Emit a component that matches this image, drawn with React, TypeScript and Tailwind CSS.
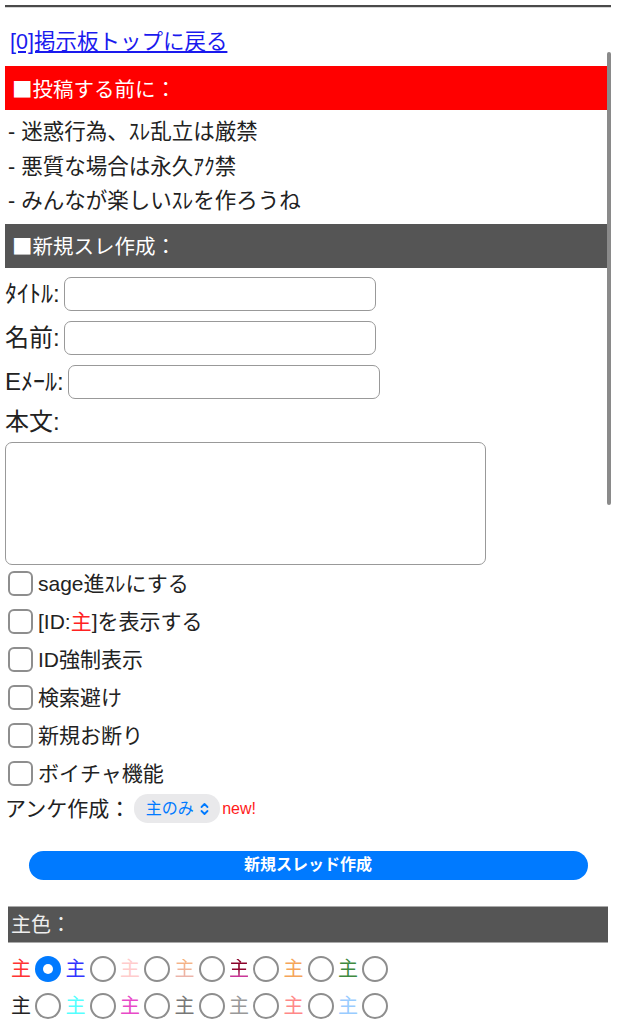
import React from 'react';

const checks = [
  { key: 'sage', label: <>sage進ｽﾚにする</> },
  {
    key: 'id',
    label: (
      <>
        [ID:<span className="text-[#ff2222]">主</span>]を表示する
      </>
    ),
  },
  { key: 'force', label: <>ID強制表示</> },
  { key: 'search', label: <>検索避け</> },
  { key: 'new', label: <>新規お断り</> },
  { key: 'voice', label: <>ボイチャ機能</> },
];

const colorRows = [
  [
    'text-[#ff3333]',
    'text-[#3333ff]',
    'text-[#ffcccc]',
    'bg-linear-to-b from-[#f7b27a] to-[#eab4b0] bg-clip-text text-transparent',
    'bg-linear-to-b from-[#8a0028] via-[#8a0028] to-[#e040c0] bg-clip-text text-transparent',
    'text-[#f5a55a]',
    'text-[#3f8a3f]',
  ],
  [
    'text-[#222222]',
    'text-[#55ffff]',
    'text-[#e84ac8]',
    'text-[#777777]',
    'text-[#999999]',
    'text-[#ff8888]',
    'text-[#99ccff]',
  ],
];

function SectionBar({ children, red }: { children: React.ReactNode; red?: boolean }) {
  return (
    <div
      className={
        "flex h-[44px] items-center px-[7px] font-['Noto_Sans_CJK_JP',sans-serif] text-[20.5px] text-white " +
        (red ? 'bg-[#ff0000]' : 'bg-[#555555]')
      }
    >
      {children}
    </div>
  );
}

function Radio({ checked }: { checked?: boolean }) {
  if (checked) {
    return (
      <span className="flex h-[26px] w-[26px] items-center justify-center rounded-full bg-[#007aff]">
        <span className="h-[10px] w-[10px] rounded-full bg-white" />
      </span>
    );
  }
  return <span className="h-[26px] w-[26px] rounded-full border-2 border-[#8e8e8e]" />;
}

export default function App() {
  return (
    <div className="relative min-h-screen bg-white pl-[5px] pr-[6px] font-['Liberation_Sans','Noto_Sans_CJK_JP',sans-serif] text-[#222]">
      <div className="pt-[5px]">
        <div className="h-[3px] border-t-2 border-b border-t-[#4a4a4a] border-b-[#d6d6d6]" />
      </div>

      <div className="pt-[21px] pb-[10px] pl-[5px]">
        <a href="#" className="text-[21.5px] leading-[26px] text-[#1a1aee] underline">
          [0]掲示板トップに戻る
        </a>
      </div>

      <SectionBar red>■投稿する前に：</SectionBar>
      <ul className="py-[5px] pl-[3px] text-[21.5px] leading-[34.5px]">
        <li>- 迷惑行為、ｽﾚ乱立は厳禁</li>
        <li>- 悪質な場合は永久ｱｸ禁</li>
        <li>- みんなが楽しいｽﾚを作ろうね</li>
      </ul>

      <SectionBar>■新規スレ作成：</SectionBar>

      <div className="flex flex-col gap-[10px] pt-[9px]">
        {['ﾀｲﾄﾙ:', '名前:', 'Eﾒｰﾙ:'].map((l) => (
          <div key={l} className="flex h-[34px] items-center">
            <span className="text-[24px] leading-none">{l}</span>
            <span className="ml-[4px] h-[34px] w-[312px] rounded-[7px] border-[1.5px] border-[#999]" />
          </div>
        ))}
      </div>
      <div className="mt-[11px] text-[24px] leading-[24px]">本文:</div>
      <div className="mt-[8px] h-[123px] w-[481px] rounded-[7px] border-[1.5px] border-[#999]" />

      <div className="flex flex-col">
        {checks.map((c) => (
          <div key={c.key} className="flex h-[38px] items-center">
            <span className="ml-[3px] h-[25px] w-[25px] rounded-[6px] border-2 border-[#8e8e8e]" />
            <span className="ml-[5px] text-[21px] leading-none">{c.label}</span>
          </div>
        ))}
      </div>

      <div className="flex h-[32px] items-center">
        <span className="text-[21px] leading-none">アンケ作成：</span>
        <span className="ml-[4px] flex h-[29px] w-[86px] items-center justify-center gap-[6px] rounded-[14px] bg-[#e9e9eb] text-[16px] text-[#007aff]">
          主のみ
          <svg width="9" height="14" viewBox="0 0 9 14" fill="none" stroke="#007aff" strokeWidth="1.8" strokeLinecap="round" strokeLinejoin="round">
            <path d="M1.5 5 L4.5 2 L7.5 5" />
            <path d="M1.5 9 L4.5 12 L7.5 9" />
          </svg>
        </span>
        <span className="ml-[2px] text-[16px] text-[#ff1a1a]">new!</span>
      </div>

      <button className="mx-auto mt-[26px] flex h-[29px] w-[559px] items-center justify-center rounded-full bg-[#007aff] text-[16px] font-bold text-white">
        新規スレッド作成
      </button>

      <div className="mx-[3px] mt-[26px] flex h-[37px] items-center border-y-[1.5px] border-[#aaa] bg-[#555555] px-[3px] font-['Noto_Sans_CJK_JP',sans-serif] text-[20px] text-[#eeeeee]">
        主色：
      </div>

      <div className="flex flex-col pt-[8px] pl-[6px]">
        {colorRows.map((row, ri) => (
          <div key={ri} className="flex h-[37px] items-center">
            {row.map((cls, i) => (
              <span key={i} className="mr-[4.5px] flex items-center gap-[4px]">
                <span className={'text-[20px] leading-none ' + cls}>主</span>
                <Radio checked={ri === 0 && i === 0} />
              </span>
            ))}
          </div>
        ))}
      </div>

      <div className="absolute right-[6px] top-[52px] h-[453px] w-[4px] rounded-full bg-[#8a8a8a]" />
    </div>
  );
}
